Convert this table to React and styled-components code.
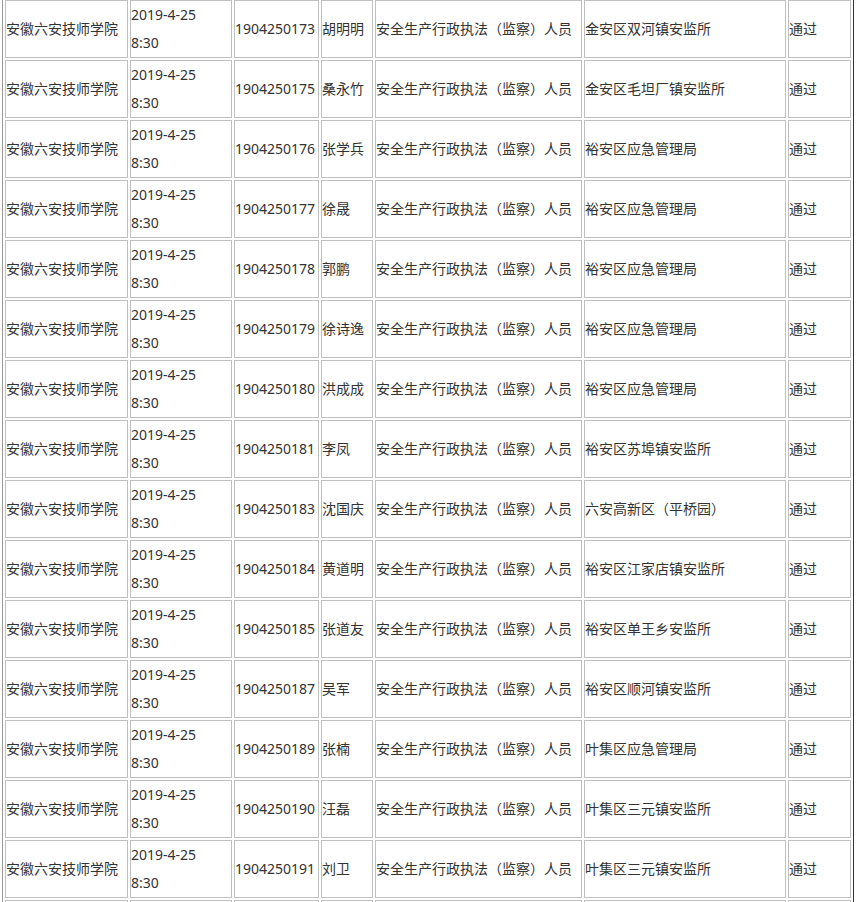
import React from "react";
import styled, { createGlobalStyle } from "styled-components";

const GlobalStyle = createGlobalStyle`
  html, body {
    margin: 0;
    padding: 0;
    background: #fff;
  }
`;

const Page = styled.div`
  overflow: hidden;
  height: 902px;
`;

const Table = styled.table`
  margin: -3px 0 0 2px;
  width: 852px;
  table-layout: fixed;
  border-collapse: separate;
  border-spacing: 2px;
  border: 1px solid;
  border-color: #9a9a9a #333 #333 #9a9a9a;
  font-family: "Noto Sans", "Noto Sans CJK SC", sans-serif;
  font-size: 14px;
  color: #333;
`;

const Cell = styled.td`
  box-sizing: border-box;
  width: ${(p) => p.$w}px;
  height: 58px;
  padding: 0;
  border: 1px solid #c0c0c0;
  line-height: 28px;
  vertical-align: middle;
  white-space: nowrap;
  overflow: hidden;
`;

const widths = [123, 102, 85, 52, 207, 202, 63];

const rows = [
  ["1904250173", "胡明明", "金安区双河镇安监所"],
  ["1904250175", "桑永竹", "金安区毛坦厂镇安监所"],
  ["1904250176", "张学兵", "裕安区应急管理局"],
  ["1904250177", "徐晟", "裕安区应急管理局"],
  ["1904250178", "郭鹏", "裕安区应急管理局"],
  ["1904250179", "徐诗逸", "裕安区应急管理局"],
  ["1904250180", "洪成成", "裕安区应急管理局"],
  ["1904250181", "李凤", "裕安区苏埠镇安监所"],
  ["1904250183", "沈国庆", "六安高新区（平桥园）"],
  ["1904250184", "黄道明", "裕安区江家店镇安监所"],
  ["1904250185", "张道友", "裕安区单王乡安监所"],
  ["1904250187", "吴军", "裕安区顺河镇安监所"],
  ["1904250189", "张楠", "叶集区应急管理局"],
  ["1904250190", "汪磊", "叶集区三元镇安监所"],
  ["1904250191", "刘卫", "叶集区三元镇安监所"],
];

export default function App() {
  return (
    <Page>
      <GlobalStyle />
      <Table>
        <tbody>
          {rows.map(([no, name, unit]) => (
            <tr key={no}>
              <Cell $w={widths[0]}>安徽六安技师学院</Cell>
              <Cell $w={widths[1]}>
                2019-4-25
                <br />
                8:30
              </Cell>
              <Cell $w={widths[2]}>{no}</Cell>
              <Cell $w={widths[3]}>{name}</Cell>
              <Cell $w={widths[4]}>安全生产行政执法（监察）人员</Cell>
              <Cell $w={widths[5]}>{unit}</Cell>
              <Cell $w={widths[6]}>通过</Cell>
            </tr>
          ))}
          {/* next row, only its top edge shows at the bottom of the view */}
          <tr>
            {widths.map((w, i) => (
              <Cell key={i} $w={w} />
            ))}
          </tr>
        </tbody>
      </Table>
    </Page>
  );
}
